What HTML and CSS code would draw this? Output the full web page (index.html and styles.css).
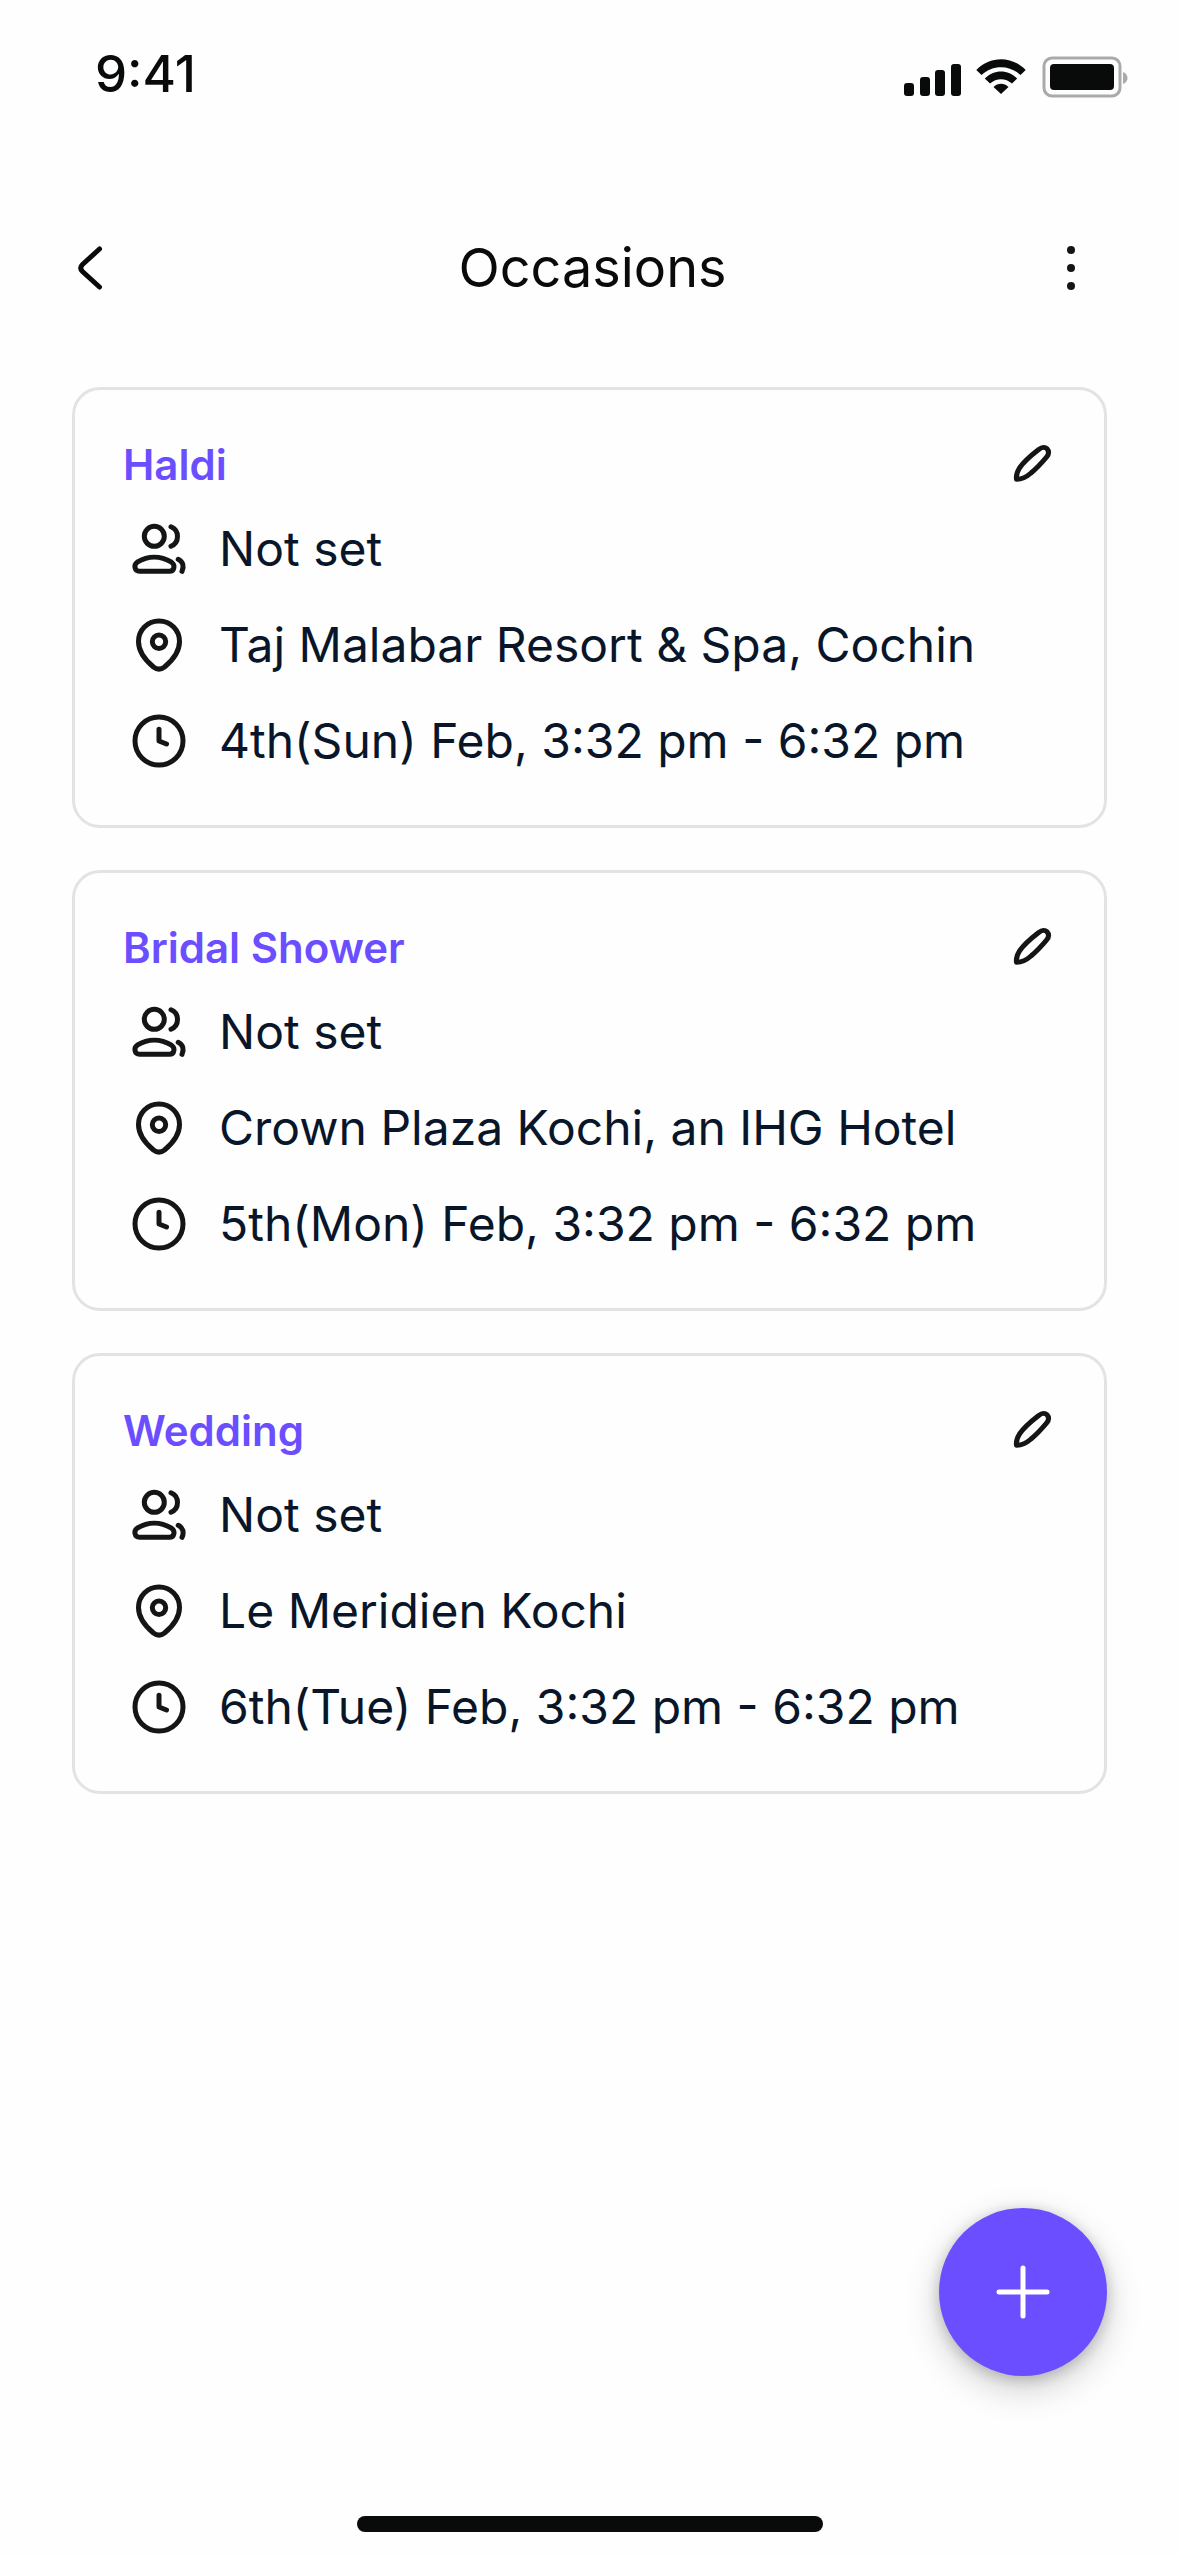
FILE: index.html
```html
<!DOCTYPE html>
<html lang="en">
<head>
<meta charset="utf-8">
<meta name="viewport" content="width=device-width, initial-scale=1">
<title>Occasions</title>
<link rel="stylesheet" href="styles.css">
</head>
<body>
<svg class="sprite" aria-hidden="true">
  <symbol id="edit" viewBox="0 0 48 48"><path d="M8.5 38.3C8 35 9 31 11.500 27C15.500 21 23 14.500 31 8.3C34 5.800 37.300 6 39 7.800C41 10 41 13 38.600 16C34 21.500 28.500 27.500 23 32C18.500 36 13 38.400 8.500 38.300Z"/></symbol>
  <symbol id="guests" viewBox="0 0 60 60"><circle cx="25.300" cy="17.300" r="10"/><path d="M42 7.800A10.500 10.500 0 0 1 42 27.200"/><path d="M10.500 52.300H40.500C45.500 52.300 46.500 46 42.500 43.200C31.500 36.600 19 36.600 8.200 43.200C4.400 46 5.500 52.300 10.500 52.300Z"/><path d="M49.200 40.300C54 42.500 55.300 47.500 53 52.300"/></symbol>
  <symbol id="place" viewBox="0 0 60 60"><path d="M30 6C18.300 6 9.500 15 9.500 26.500C9.500 37 16 45 24.500 52C28 54.700 32 54.700 35.500 52C44 45 50.500 37 50.500 26.500C50.500 15 41.700 6 30 6Z"/><circle cx="30" cy="26.700" r="6.700"/></symbol>
  <symbol id="time" viewBox="0 0 60 60"><circle cx="30" cy="30" r="24"/><path d="M30 18.300V30L37.500 33"/></symbol>
</svg>

<div class="status">
  <span>9:41</span>
  <div class="status-icons">
    <svg width="58" height="48" viewBox="0 0 58 48"><rect x="1" y="33" width="10" height="13" rx="3"/><rect x="17" y="27" width="10" height="19" rx="3"/><rect x="32" y="20" width="10" height="26" rx="3"/><rect x="48" y="14" width="10" height="32" rx="3"/></svg>
    <svg width="52" height="48" viewBox="0 0 52 48"><path d="M1.300 20C15 5.500 37 5.500 50.700 20L45.500 25C34.500 14.500 17.500 14.500 6.500 25Z"/><path d="M9.800 28.500C19 19 33 19 42.200 28.500L37 33.500C30.500 27.700 21.500 27.700 15 33.500Z"/><path d="M18.500 37C23 32.800 29 32.800 33.500 37L26 44Z"/></svg>
    <svg width="88" height="48" viewBox="0 0 88 48"><rect class="shell" x="3" y="8" width="76" height="38" rx="8"/><rect x="9" y="14" width="64" height="26" rx="4"/><path class="cap" d="M82 22C88 24 88 32 82 34Z"/></svg>
  </div>
</div>

<header class="header">
  <button class="back" type="button" aria-label="Back"><svg width="36" height="48" viewBox="0 0 36 48"><path d="M27.500 5L10.500 20.500Q7 24 10.500 27.500L27.500 43"/></svg></button>
  <h1>Occasions</h1>
  <button class="more" type="button" aria-label="More options"><svg width="48" height="48" viewBox="0 0 48 48"><circle cx="24" cy="6" r="4"/><circle cx="24" cy="24" r="4"/><circle cx="24" cy="42" r="4"/></svg></button>
</header>

<main class="cards">
  <article class="card">
    <div class="card-head"><h2>Haldi</h2><button class="edit" type="button" aria-label="Edit Haldi"><svg><use href="#edit"/></svg></button></div>
    <ul class="details">
      <li><svg><use href="#guests"/></svg>Not set</li>
      <li><svg><use href="#place"/></svg>Taj Malabar Resort &amp; Spa, Cochin</li>
      <li><svg><use href="#time"/></svg>4th(Sun) Feb, 3:32 pm - 6:32 pm</li>
    </ul>
  </article>
  <article class="card">
    <div class="card-head"><h2>Bridal Shower</h2><button class="edit" type="button" aria-label="Edit Bridal Shower"><svg><use href="#edit"/></svg></button></div>
    <ul class="details">
      <li><svg><use href="#guests"/></svg>Not set</li>
      <li><svg><use href="#place"/></svg>Crown Plaza Kochi, an IHG Hotel</li>
      <li><svg><use href="#time"/></svg>5th(Mon) Feb, 3:32 pm - 6:32 pm</li>
    </ul>
  </article>
  <article class="card">
    <div class="card-head"><h2>Wedding</h2><button class="edit" type="button" aria-label="Edit Wedding"><svg><use href="#edit"/></svg></button></div>
    <ul class="details">
      <li><svg><use href="#guests"/></svg>Not set</li>
      <li><svg><use href="#place"/></svg>Le Meridien Kochi</li>
      <li><svg><use href="#time"/></svg>6th(Tue) Feb, 3:32 pm - 6:32 pm</li>
    </ul>
  </article>
</main>

<button class="add" type="button" aria-label="Add occasion"><svg width="60" height="60" viewBox="0 0 60 60"><path d="M30 6V54M6 30H54"/></svg></button>
<div class="home-bar"></div>
</body>
</html>
```

FILE: styles.css
```css
* {
  box-sizing: border-box;
}

body {
  margin: 0;
  min-height: 100vh;
  display: flex;
  flex-direction: column;
  background: #fefefe;
  color: #090b0a;
  font-family: Inter, "Liberation Sans", sans-serif;
}

h1,
h2,
ul {
  margin: 0;
  padding: 0;
}

button {
  padding: 0;
  border: 0;
  background: none;
  color: inherit;
  display: flex;
  align-items: center;
  justify-content: center;
  cursor: pointer;
}

svg {
  display: block;
  flex: none;
}

.sprite {
  position: absolute;
  width: 0;
  height: 0;
}

/* Status bar */
.status {
  display: flex;
  align-items: center;
  justify-content: space-between;
  padding: 44px 50px 0 95px;
  font-size: 51px;
  line-height: 60px;
  font-weight: 500;
}

.status-icons {
  display: flex;
  gap: 14px;
  fill: #090b0a;
}

.shell {
  fill: none;
  stroke: #a9aaaa;
  stroke-width: 3;
}

.cap {
  fill: #a9aaaa;
}

/* Page header */
.header {
  display: flex;
  align-items: center;
  justify-content: space-between;
  padding: 128px 72px 83px;
}

.header h1 {
  font-size: 54px;
  line-height: 72px;
  font-weight: 400;
}

.back {
  width: 78px;
  height: 72px;
  justify-content: flex-start;
}

.back svg {
  fill: none;
  stroke: #090b0a;
  stroke-width: 5;
  stroke-linecap: round;
}

.more {
  width: 72px;
  height: 72px;
}

.more svg {
  fill: #141516;
}

/* Occasion cards */
.cards {
  display: flex;
  flex-direction: column;
  gap: 42px;
  padding: 0 72px;
}

.card {
  padding: 45px 48px 54px;
  border: 3px solid #e2e4e4;
  border-radius: 28px;
}

.card-head {
  display: flex;
  align-items: center;
  justify-content: space-between;
}

.card-head h2 {
  color: #6b4eff;
  font-size: 42px;
  line-height: 60px;
  font-weight: 600;
}

.edit svg {
  width: 48px;
  height: 48px;
}

.edit svg,
.details svg {
  fill: none;
  stroke: #141516;
  stroke-width: 5;
  stroke-linecap: round;
  stroke-linejoin: round;
}

.details {
  display: flex;
  flex-direction: column;
  gap: 36px;
  padding: 24px 0 0 6px;
  list-style: none;
}

.details li {
  display: flex;
  align-items: center;
  gap: 30px;
  color: #09162a;
  font-size: 48px;
  line-height: 60px;
}

.details svg {
  width: 60px;
  height: 60px;
}

/* Floating action button */
.add {
  position: fixed;
  right: 72px;
  bottom: 180px;
  width: 168px;
  height: 168px;
  border-radius: 50%;
  background: #6b4eff;
  box-shadow: 0 3px 15px rgba(0, 0, 0, 0.2), 0 12px 36px rgba(0, 0, 0, 0.2);
}

.add svg {
  fill: none;
  stroke: #fff;
  stroke-width: 5;
  stroke-linecap: round;
}

.home-bar {
  width: 466px;
  height: 16px;
  margin: auto auto 24px;
  border-radius: 8px;
  background: #090b0a;
}
```
